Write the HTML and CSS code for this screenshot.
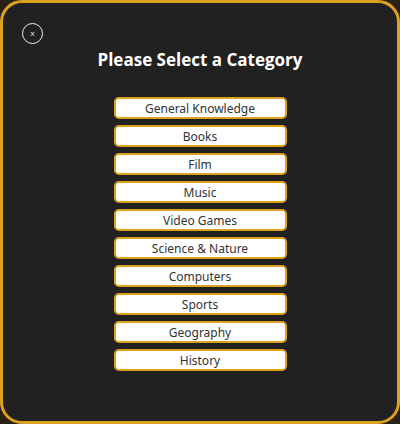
FILE: index.html
```html
<!DOCTYPE html>
<html>
<head>
<meta charset="utf-8">
<link rel="stylesheet" href="styles.css">
</head>
<body>
<div class="modal">
  <button class="close">x</button>
  <h1 class="title">Please Select a Category</h1>
  <div class="list">
    <button class="cat">General Knowledge</button>
    <button class="cat">Books</button>
    <button class="cat">Film</button>
    <button class="cat">Music</button>
    <button class="cat">Video Games</button>
    <button class="cat">Science &amp; Nature</button>
    <button class="cat">Computers</button>
    <button class="cat">Sports</button>
    <button class="cat">Geography</button>
    <button class="cat">History</button>
  </div>
</div>
</body>
</html>
```
FILE: styles.css
```css
html, body {
  margin: 0;
  padding: 0;
  background: #2b2016;
}
.modal {
  box-sizing: border-box;
  width: 400px;
  height: 424px;
  border: 3px solid #dca21e;
  border-radius: 22px;
  background: #212121;
  padding: 20px 0 0 19px;
  display: flex;
  flex-direction: column;
}
.close {
  box-sizing: border-box;
  width: 21px;
  height: 21px;
  border: 1.5px solid #f0f0f0;
  border-radius: 50%;
  background: transparent;
  color: #e8e8e8;
  font-family: "Liberation Sans", sans-serif;
  font-size: 8px;
  line-height: 1;
  padding: 0;
  display: flex;
  align-items: center;
  justify-content: center;
}
.title {
  margin: 4px 19px 0 0;
  height: 24px;
  line-height: 24px;
  text-align: center;
  color: #ffffff;
  font-family: "Open Sans", sans-serif;
  font-weight: 700;
  font-size: 17px;
}
.list {
  margin: 25px 19px 0 0;
  display: flex;
  flex-direction: column;
  align-items: center;
  gap: 6px;
}
.cat {
  box-sizing: border-box;
  width: 173px;
  height: 22px;
  border: 2px solid #dca21e;
  border-radius: 5px;
  background: #ffffff;
  color: #333333;
  font-family: "Noto Sans", sans-serif;
  font-size: 12px;
  padding: 0;
  display: flex;
  align-items: center;
  justify-content: center;
}
```
